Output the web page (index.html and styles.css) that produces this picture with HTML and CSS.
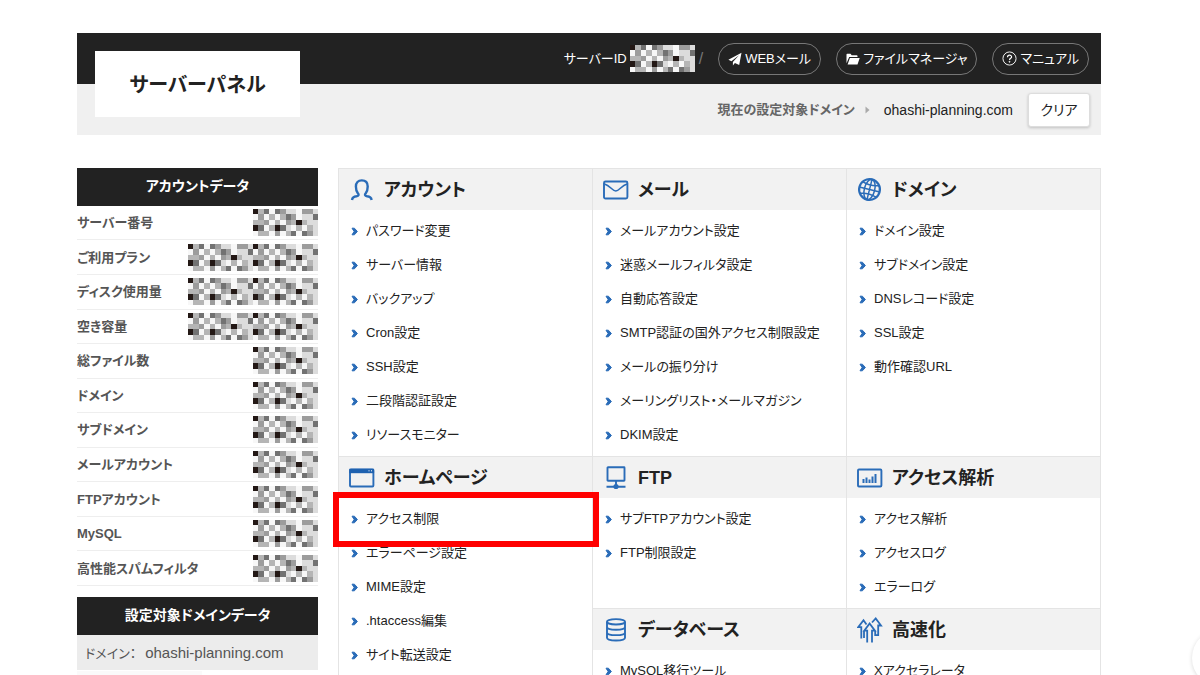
FILE: index.html
```html
<!DOCTYPE html>
<html lang="ja">
<head>
<meta charset="utf-8">
<title>サーバーパネル</title>
<link rel="stylesheet" href="styles.css">
</head>
<body>
<svg class="defs" aria-hidden="true">
  <symbol id="mosaic" viewBox="0 0 12 5" preserveAspectRatio="none">
    <g shape-rendering="crispEdges" stroke-width="1" fill="none">
      <path fill="#dcdcdc" d="M0 0h12v5H0z"/>
      <path stroke="#f7f7f7" d="M3 .5h1M8 .5h1M0 1.5h1M2 1.5h1M4 1.5h1M8 1.5h1M3 2.5h1M5 2.5h1M2 3.5h1M7 3.5h1M9 3.5h1M0 4.5h1M3 4.5h1M5 4.5h1M8 4.5h1"/>
      <path stroke="#b5b5b5" d="M1 .5h1M3 1.5h1M5 1.5h1M0 2.5h2M4 2.5h1M7 2.5h1M9 2.5h1M3 3.5h1M8 3.5h1M10 3.5h1M1 4.5h2M6 4.5h1"/>
      <path stroke="#9c9c9c" d="M5 .5h1M9 .5h2M1 1.5h1M7 1.5h1M2 2.5h1M6 2.5h1M4 4.5h1M10 4.5h1"/>
      <path stroke="#727272" d="M2 .5h1M4 .5h1M6 1.5h1M11 1.5h1M1 3.5h1M5 3.5h1M7 4.5h1M9 4.5h1"/>
      <path stroke="#231815" d="M0 .5h1M8 2.5h1M0 3.5h1M4 3.5h1"/>
    </g>
  </symbol>
  <symbol id="arrow" viewBox="0 0 8 9"><path d="M1 1.200h2.400L6.400 4.500 3.400 7.800H1L3.100 4.500z" fill="#2a6cb8" stroke="#2a6cb8" stroke-width="1"/></symbol>
</svg>

<div class="page">
  <header class="header">
    <div class="topbar">
      <span class="server-id">サーバーID</span>
      <svg class="mosaic"><use href="#mosaic"/></svg>
      <span class="slash">/</span>
      <a class="pill" href="#">
        <svg width="14" height="14" viewBox="0 0 14 14"><path fill="#fff" d="M13.5.8.4 7.8l3 1.4L11 3.2 4.9 9.9v3.5l2-2.3 4.3 1.8z"/></svg>
        WEBメール</a>
      <a class="pill" href="#">
        <svg width="14" height="14" viewBox="0 0 14 14"><path fill="#fff" d="M.5 11.2V2.6Q.5 1.8 1.3 1.8h3.2l1.2 1.4h5q.8 0 .8.8v1H3.2zM1.6 12.4 3.9 6h9.8l-2.2 6.4z"/></svg>
        ファイルマネージャ</a>
      <a class="pill" href="#">
        <svg width="15" height="15" viewBox="0 0 16 16" fill="none" stroke="#fff"><circle cx="8" cy="8" r="7"/><path d="M5.900 6.600c0-2.800 4.300-2.700 4.300-.3C10.200 7.800 8 7.800 8 9.600" stroke-width="1.300"/><circle cx="8" cy="11.500" r=".5" fill="#fff"/></svg>
        マニュアル</a>
    </div>
    <div class="domainbar">
      <span class="current">現在の設定対象ドメイン</span>
      <svg class="crumb" width="5" height="8" viewBox="0 0 5 8"><path d="M.5.5v7l4-3.500z" fill="#aaa"/></svg>
      <span class="domain">ohashi-planning.com</span>
      <button class="clear" type="button">クリア</button>
    </div>
    <a class="logo" href="#">サーバーパネル</a>
  </header>

  <div class="columns">
    <aside class="sidebar">
      <h2 class="side-title">アカウントデータ</h2>
      <table class="stats">
        <tr><th scope="row">サーバー番号</th><td><svg class="mosaic"><use href="#mosaic"/></svg></td></tr>
        <tr><th scope="row">ご利用プラン</th><td><svg class="mosaic"><use href="#mosaic"/></svg><svg class="mosaic"><use href="#mosaic"/></svg></td></tr>
        <tr><th scope="row">ディスク使用量</th><td><svg class="mosaic"><use href="#mosaic"/></svg><svg class="mosaic"><use href="#mosaic"/></svg></td></tr>
        <tr><th scope="row">空き容量</th><td><svg class="mosaic"><use href="#mosaic"/></svg><svg class="mosaic"><use href="#mosaic"/></svg></td></tr>
        <tr><th scope="row">総ファイル数</th><td><svg class="mosaic"><use href="#mosaic"/></svg></td></tr>
        <tr><th scope="row">ドメイン</th><td><svg class="mosaic"><use href="#mosaic"/></svg></td></tr>
        <tr><th scope="row">サブドメイン</th><td><svg class="mosaic"><use href="#mosaic"/></svg></td></tr>
        <tr><th scope="row">メールアカウント</th><td><svg class="mosaic"><use href="#mosaic"/></svg></td></tr>
        <tr><th scope="row">FTPアカウント</th><td><svg class="mosaic"><use href="#mosaic"/></svg></td></tr>
        <tr><th scope="row">MySQL</th><td><svg class="mosaic"><use href="#mosaic"/></svg></td></tr>
        <tr><th scope="row">高性能スパムフィルタ</th><td><svg class="mosaic"><use href="#mosaic"/></svg></td></tr>
      </table>
      <h2 class="side-title">設定対象ドメインデータ</h2>
      <p class="side-domain"><span>ドメイン：</span><span class="side-name">ohashi-planning.com</span></p>
      <div class="side-next"></div>
    </aside>

    <main class="menu">
      <section class="group">
        <h2><svg width="26" height="26" viewBox="0 0 26 26" fill="none" stroke="#2a6cb8" stroke-width="2.400"><path d="M3 23c.4-2.600 2.200-3.500 4.500-3.700 2.300-.3 2.700-1.700 1.300-3.200C7.400 14.500 6.900 12.400 6.900 9.600c0-4 2.200-6.200 5.900-6.200s5.900 2.200 5.900 6.200c0 2.800-.5 4.900-1.900 6.500-1.400 1.500-1 2.900 1.300 3.200 2.300.2 4.100 1.100 4.500 3.700"/></svg>アカウント</h2>
        <ul>
          <li><a href="#"><svg class="arrow"><use href="#arrow"/></svg>パスワード変更</a></li>
          <li><a href="#"><svg class="arrow"><use href="#arrow"/></svg>サーバー情報</a></li>
          <li><a href="#"><svg class="arrow"><use href="#arrow"/></svg>バックアップ</a></li>
          <li><a href="#"><svg class="arrow"><use href="#arrow"/></svg>Cron設定</a></li>
          <li><a href="#"><svg class="arrow"><use href="#arrow"/></svg>SSH設定</a></li>
          <li><a href="#"><svg class="arrow"><use href="#arrow"/></svg>二段階認証設定</a></li>
          <li><a href="#"><svg class="arrow"><use href="#arrow"/></svg>リソースモニター</a></li>
        </ul>
      </section>

      <section class="group">
        <h2><svg width="26" height="26" viewBox="0 0 26 26" fill="none" stroke="#2a6cb8" stroke-width="1.900"><rect x="1" y="4.500" width="23.400" height="17" rx="1.500"/><path d="M1.500 7C7 8.500 9.500 14 12.800 14S18.500 8.500 24 7" stroke-width="1.600"/></svg>メール</h2>
        <ul>
          <li><a href="#"><svg class="arrow"><use href="#arrow"/></svg>メールアカウント設定</a></li>
          <li><a href="#"><svg class="arrow"><use href="#arrow"/></svg>迷惑メールフィルタ設定</a></li>
          <li><a href="#"><svg class="arrow"><use href="#arrow"/></svg>自動応答設定</a></li>
          <li><a href="#"><svg class="arrow"><use href="#arrow"/></svg>SMTP認証の国外アクセス制限設定</a></li>
          <li><a href="#"><svg class="arrow"><use href="#arrow"/></svg>メールの振り分け</a></li>
          <li><a href="#"><svg class="arrow"><use href="#arrow"/></svg>メーリングリスト・メールマガジン</a></li>
          <li><a href="#"><svg class="arrow"><use href="#arrow"/></svg>DKIM設定</a></li>
        </ul>
      </section>

      <section class="group">
        <h2><svg width="26" height="26" viewBox="0 0 26 26" fill="none" stroke="#2a6cb8" stroke-width="1.500"><g transform="rotate(14 12.500 12.500)"><circle cx="12.500" cy="12.500" r="10.400" stroke-width="2.200"/><ellipse cx="12.500" cy="12.500" rx="5.200" ry="10.400"/><path d="M12.500 2v21M2 12.500h21M4 6.500q8.500 3 17 0M4 18.500q8.500-3 17 0"/></g></svg>ドメイン</h2>
        <ul>
          <li><a href="#"><svg class="arrow"><use href="#arrow"/></svg>ドメイン設定</a></li>
          <li><a href="#"><svg class="arrow"><use href="#arrow"/></svg>サブドメイン設定</a></li>
          <li><a href="#"><svg class="arrow"><use href="#arrow"/></svg>DNSレコード設定</a></li>
          <li><a href="#"><svg class="arrow"><use href="#arrow"/></svg>SSL設定</a></li>
          <li><a href="#"><svg class="arrow"><use href="#arrow"/></svg>動作確認URL</a></li>
        </ul>
      </section>

      <section class="group tall">
        <h2><svg width="26" height="26" viewBox="0 0 26 26" fill="none" stroke="#2a6cb8" stroke-width="1.900"><rect x="1" y="4.500" width="23.400" height="17" rx="1"/><path d="M.3 3.800h24.800v4.400H.3z" fill="#1f62b0" stroke="none"/><path d="M19.500 5.800h1M22 5.800h1" stroke="#fff" stroke-width="1"/></svg>ホームページ</h2>
        <ul>
          <li class="marked"><a href="#"><svg class="arrow"><use href="#arrow"/></svg>アクセス制限</a></li>
          <li><a href="#"><svg class="arrow"><use href="#arrow"/></svg>エラーページ設定</a></li>
          <li><a href="#"><svg class="arrow"><use href="#arrow"/></svg>MIME設定</a></li>
          <li><a href="#"><svg class="arrow"><use href="#arrow"/></svg>.htaccess編集</a></li>
          <li><a href="#"><svg class="arrow"><use href="#arrow"/></svg>サイト転送設定</a></li>
        </ul>
      </section>

      <section class="group">
        <h2><svg width="26" height="26" viewBox="0 0 26 26" fill="none" stroke="#2a6cb8" stroke-width="1.900"><rect x="4.500" y="2.300" width="17" height="13.400" rx=".5"/><path d="M13 16v5M3.500 21.700h19"/><circle cx="13" cy="21.500" r="2.600" fill="#2a6cb8" stroke="none"/></svg>FTP</h2>
        <ul>
          <li><a href="#"><svg class="arrow"><use href="#arrow"/></svg>サブFTPアカウント設定</a></li>
          <li><a href="#"><svg class="arrow"><use href="#arrow"/></svg>FTP制限設定</a></li>
        </ul>
      </section>

      <section class="group">
        <h2><svg width="26" height="26" viewBox="0 0 26 26" fill="none" stroke="#2a6cb8" stroke-width="1.900"><rect x="1" y="4.500" width="23.400" height="17" rx="1"/><path d="M6.500 18v-4M9.500 18v-5.500M12.500 18v-3.500M15.500 18v-6.500M18.500 18v-9" stroke-width="2"/></svg>アクセス解析</h2>
        <ul>
          <li><a href="#"><svg class="arrow"><use href="#arrow"/></svg>アクセス解析</a></li>
          <li><a href="#"><svg class="arrow"><use href="#arrow"/></svg>アクセスログ</a></li>
          <li><a href="#"><svg class="arrow"><use href="#arrow"/></svg>エラーログ</a></li>
        </ul>
      </section>

      <section class="group">
        <h2><svg width="26" height="26" viewBox="0 0 26 26" fill="none" stroke="#2a6cb8" stroke-width="1.900"><ellipse cx="13" cy="4.800" rx="9" ry="2.700"/><path d="M4 4.800v16c0 3.600 18 3.600 18 0v-16M4 10.100c0 3.600 18 3.600 18 0M4 15.400c0 3.600 18 3.600 18 0"/></svg>データベース</h2>
        <ul>
          <li><a href="#"><svg class="arrow"><use href="#arrow"/></svg>MySQL移行ツール</a></li>
        </ul>
      </section>

      <section class="group">
        <h2><svg width="26" height="26" viewBox="0 0 26 26" fill="none" stroke="#2a6cb8" stroke-width="1.800"><path d="M10.200 25.500V13.600H7.300L12.600 6.500l5.300 7.100H15v11.900M4.300 21.500V10.200H1.200L6.500 3.200l3 4.300M7 21V14.500M15 5.500 18.700 1.500l5.300 7h-2.800v9.700h-3V14"/></svg>高速化</h2>
        <ul>
          <li><a href="#"><svg class="arrow"><use href="#arrow"/></svg>Xアクセラレータ</a></li>
        </ul>
      </section>
    </main>
  </div>
</div>
<button class="float" type="button" aria-label="メニュー"></button>
</body>
</html>
```
FILE: styles.css
```css
* { box-sizing: border-box; }
body {
  margin: 0;
  background: #fff;
  color: #222;
  font: 13px/20px "Liberation Sans", "Noto Sans CJK JP", sans-serif;
  font-feature-settings: "palt";
}
h2, p, ul { margin: 0; padding: 0; }
ul { list-style: none; }
a { color: inherit; text-decoration: none; }
svg { flex: none; }
.defs { position: absolute; width: 0; height: 0; }
.page {
  height: 100vh;
  overflow: hidden;
  padding: 33px 99px 0 77px;
}

.header { position: relative; background: #f0f0f0; }
.topbar {
  display: flex;
  align-items: center;
  justify-content: flex-end;
  height: 51px;
  padding-right: 12px;
  background: #222;
  color: #fff;
}
.mosaic { width: 65px; height: 27px; }
.server-id { margin-right: 3px; }
.slash { margin: 0 15px 0 4px; color: #777; font-size: 16px; }
.pill {
  display: flex;
  align-items: center;
  gap: 3px;
  height: 32px;
  padding: 0 9px;
  border: 1px solid #777;
  border-radius: 16px;
}
.pill + .pill { margin-left: 15px; }
.domainbar {
  display: flex;
  align-items: center;
  justify-content: flex-end;
  height: 51px;
  padding-right: 11px;
  font-size: 14px;
}
.current { color: #666; font-weight: bold; font-size: 13px; }
.crumb { margin: 0 14px 0 10px; }
.domain { margin-right: 15px; }
.clear {
  width: 62px;
  height: 34px;
  padding: 0;
  border: 1px solid #ddd;
  border-radius: 3px;
  background: #fff;
  box-shadow: 0 1px 3px rgba(0, 0, 0, .2);
  color: #222;
  font: inherit;
  font-feature-settings: inherit;
}
.logo {
  position: absolute;
  top: 18px;
  left: 18px;
  display: flex;
  align-items: center;
  justify-content: center;
  width: 205px;
  height: 66px;
  padding-top: 2px;
  background: #fff;
  font-size: 20px;
  font-weight: bold;
}

.columns { display: flex; gap: 20px; margin-top: 33px; }
.sidebar { flex: none; width: 241px; }
.side-title {
  height: 38px;
  background: #222;
  color: #fff;
  font-size: 14px;
  line-height: 36px;
  text-align: center;
}
.stats {
  width: 100%;
  height: 380px;
  margin-bottom: 11px;
  border-collapse: collapse;
  table-layout: fixed;
}
.stats tr { border-bottom: 1px solid #eee; }
.stats th {
  width: 111px;
  padding: 1px 0 0;
  color: #555;
  text-align: left;
  white-space: nowrap;
}
.stats td {
  width: 130px;
  padding: 0;
  text-align: right;
  line-height: 0;
  white-space: nowrap;
}
.side-domain {
  height: 35px;
  padding-left: 8px;
  background: #ececec;
  color: #555;
  line-height: 35px;
}
.side-name { margin-left: 9px; font-size: 15px; }
.side-next { width: 125px; height: 40px; margin-top: 1px; background: #fafafa; }

.menu {
  flex: 1;
  display: grid;
  grid-template-columns: repeat(3, 1fr);
  align-self: flex-start;
  border-right: 1px solid #e4e4e4;
}
.group { border-top: 1px solid #e4e4e4; border-left: 1px solid #e4e4e4; }
.tall { grid-row: span 2; }
.group h2 {
  display: flex;
  align-items: center;
  gap: 9px;
  height: 41px;
  padding-left: 10px;
  background: #f2f2f2;
  font-size: 18px;
}
.group ul { padding: 4px 0; }
.group li { position: relative; }
.group li a {
  display: flex;
  align-items: center;
  gap: 7px;
  height: 34px;
  padding-left: 12px;
}
.arrow { width: 8px; height: 9px; }
.marked::after {
  content: "";
  position: absolute;
  z-index: 1;
  inset: -10px -7px -11px -6px;
  border: 6px solid #f00;
  pointer-events: none;
}
.float {
  position: fixed;
  right: -50px;
  bottom: -12px;
  width: 58px;
  height: 58px;
  border: 0;
  border-radius: 50%;
  background: #fff;
  box-shadow: 0 1px 4px rgba(0, 0, 0, .15);
}
```
